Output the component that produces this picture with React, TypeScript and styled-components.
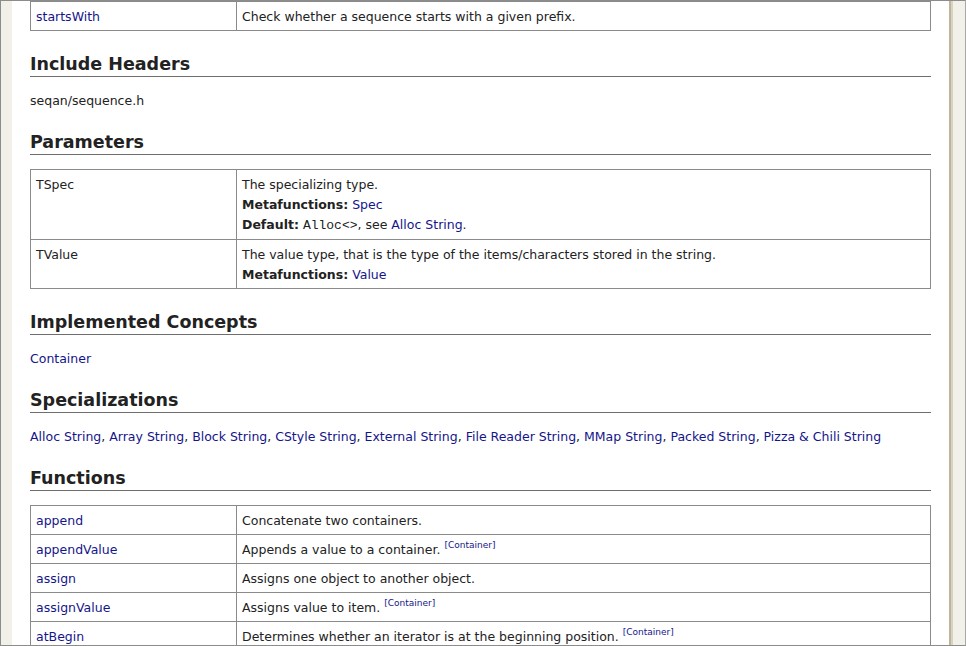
import styled, { createGlobalStyle } from "styled-components";

const GlobalStyle = createGlobalStyle`
  html, body {
    margin: 0;
    padding: 0;
    background: #ffffff;
  }
`;

const colors = {
  text: "#222222",
  link: "#15158a",
  rule: "#6e6e6e",
  cellBorder: "#8a8a8a",
  frame: "#8c8c8c",
  gutter: "#f2f1e9",
};

const Frame = styled.div`
  display: flex;
  width: 966px;
  height: 646px;
  box-sizing: border-box;
  border: 1px solid ${colors.frame};
  border-right-color: #a8a8a8;
  overflow: hidden;
  font-family: "DejaVu Sans", Verdana, sans-serif;
  font-size: 12.5px;
  color: ${colors.text};
`;

const LeftGutter = styled.div`
  width: 11px;
  flex: none;
  background: ${colors.gutter};
`;

const Page = styled.div`
  flex: 1;
  background: #fff;
  padding: 0 18px;
  overflow: hidden;
`;

const Scrollbar = styled.div`
  width: 14px;
  flex: none;
  background: ${colors.gutter};
  border-left: 2px solid #bdb59c;
  box-shadow: inset 2px 0 0 #d8d2bf;
`;

const Heading = styled.h2<{ $afterText?: boolean }>`
  margin: ${(p) => (p.$afterText ? "19px" : "21px")} 0 12px;
  font-size: 17.5px;
  line-height: 24px;
  font-weight: bold;
  border-bottom: 1px solid ${colors.rule};
`;

const Para = styled.p`
  margin: 0;
  padding-top: 2px;
  line-height: 20px;
`;

const Link = styled.a`
  color: ${colors.link};
  text-decoration: none;
`;

const Sup = styled.sup`
  font-size: 9px;
  line-height: 0;
  vertical-align: 6px;
  color: ${colors.link};
`;

const Code = styled.code`
  font-family: "Liberation Mono", "Courier New", monospace;
  font-size: 13px;
`;

const Table = styled.table`
  width: 100%;
  table-layout: fixed;
  border-collapse: collapse;
  border: 1px solid ${colors.cellBorder};
  margin-top: 14px;
`;

const Cell = styled.td<{ $wide?: boolean }>`
  border: 1px solid ${colors.cellBorder};
  padding: 5px 5px 3px;
  line-height: 20px;
  vertical-align: top;
  width: ${(p) => (p.$wide ? "auto" : "195px")};
`;

const TopTable = styled(Table)`
  margin-top: 0;
`;

type FnRow = { name: string; text: string; concept?: boolean };

const functions: FnRow[] = [
  { name: "append", text: "Concatenate two containers." },
  { name: "appendValue", text: "Appends a value to a container.", concept: true },
  { name: "assign", text: "Assigns one object to another object." },
  { name: "assignValue", text: "Assigns value to item.", concept: true },
  { name: "atBegin", text: "Determines whether an iterator is at the beginning position.", concept: true },
];

const specs = [
  "Alloc String",
  "Array String",
  "Block String",
  "CStyle String",
  "External String",
  "File Reader String",
  "MMap String",
  "Packed String",
  "Pizza & Chili String",
];

export default function App() {
  return (
    <>
      <GlobalStyle />
      <Frame>
        <LeftGutter />
        <Page>
          <TopTable>
            <tbody>
              <tr>
                <Cell>
                  <Link>startsWith</Link>
                </Cell>
                <Cell $wide>Check whether a sequence starts with a given prefix.</Cell>
              </tr>
            </tbody>
          </TopTable>

          <Heading>Include Headers</Heading>
          <Para>seqan/sequence.h</Para>

          <Heading $afterText>Parameters</Heading>
          <Table>
            <tbody>
              <tr>
                <Cell>TSpec</Cell>
                <Cell $wide>
                  The specializing type.
                  <br />
                  <b>Metafunctions:</b> <Link>Spec</Link>
                  <br />
                  <b>Default:</b> <Code>Alloc&lt;&gt;</Code>, see <Link>Alloc String</Link>.
                </Cell>
              </tr>
              <tr>
                <Cell>TValue</Cell>
                <Cell $wide>
                  The value type, that is the type of the items/characters stored in the string.
                  <br />
                  <b>Metafunctions:</b> <Link>Value</Link>
                </Cell>
              </tr>
            </tbody>
          </Table>

          <Heading>Implemented Concepts</Heading>
          <Para>
            <Link>Container</Link>
          </Para>

          <Heading $afterText>Specializations</Heading>
          <Para>
            {specs.map((s, i) => (
              <span key={s}>
                <Link>{s}</Link>
                {i < specs.length - 1 ? ", " : ""}
              </span>
            ))}
          </Para>

          <Heading $afterText>Functions</Heading>
          <Table>
            <tbody>
              {functions.map((f) => (
                <tr key={f.name}>
                  <Cell>
                    <Link>{f.name}</Link>
                  </Cell>
                  <Cell $wide>
                    {f.text}
                    {f.concept && (
                      <>
                        {" "}
                        <Sup>[Container]</Sup>
                      </>
                    )}
                  </Cell>
                </tr>
              ))}
            </tbody>
          </Table>
        </Page>
        <Scrollbar />
      </Frame>
    </>
  );
}
